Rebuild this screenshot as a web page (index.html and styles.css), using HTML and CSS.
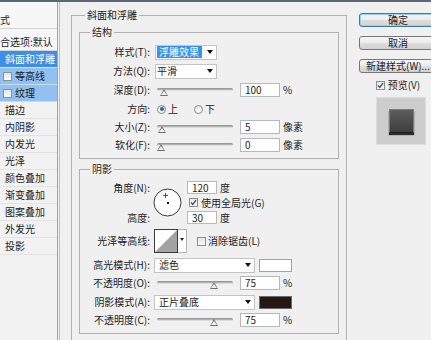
FILE: index.html
```html
<!DOCTYPE html>
<html lang="zh-CN">
<head>
    <meta charset="UTF-8">
    <meta name="viewport" content="width=device-width, initial-scale=1.0">
    <title>图层样式</title>
    <link rel="stylesheet" href="styles.css">
</head>
<body>
    <div class="titlebar"></div>
    <div class="dialog">
        <ul class="effects">
            <li class="head">样式</li>
            <li class="head blend">混合选项:默认</li>
            <li class="active">斜面和浮雕</li>
            <li class="sub"><span class="check"></span>等高线</li>
            <li class="sub"><span class="check"></span>纹理</li>
            <li>描边</li>
            <li>内阴影</li>
            <li>内发光</li>
            <li>光泽</li>
            <li>颜色叠加</li>
            <li>渐变叠加</li>
            <li>图案叠加</li>
            <li>外发光</li>
            <li>投影</li>
        </ul>

        <div class="main">
            <fieldset class="group">
                <legend>斜面和浮雕</legend>

                <fieldset class="section">
                    <legend>结构</legend>
                    <div class="row">
                        <label>样式(T):</label>
                        <div class="select short"><span class="picked">浮雕效果</span></div>
                    </div>
                    <div class="row">
                        <label>方法(Q):</label>
                        <div class="select short"><span>平滑</span></div>
                    </div>
                    <div class="row">
                        <label>深度(D):</label>
                        <div class="slider"><span class="thumb" style="left:3px"></span></div>
                        <div class="field">100</div>
                        <span class="unit">%</span>
                    </div>
                    <div class="row">
                        <label>方向:</label>
                        <span class="radio on"></span><span class="opt">上</span>
                        <span class="radio down"></span><span class="opt">下</span>
                    </div>
                    <div class="row tight">
                        <label>大小(Z):</label>
                        <div class="slider"><span class="thumb" style="left:1px"></span></div>
                        <div class="field">5</div>
                        <span class="unit">像素</span>
                    </div>
                    <div class="row tight">
                        <label>软化(F):</label>
                        <div class="slider"><span class="thumb" style="left:0"></span></div>
                        <div class="field">0</div>
                        <span class="unit">像素</span>
                    </div>
                </fieldset>

                <fieldset class="section shade">
                    <legend>阴影</legend>
                    <div class="angle">
                        <div class="labels">
                            <label>角度(N):</label>
                            <label>高度:</label>
                        </div>
                        <svg class="dial" width="29" height="29" viewBox="0 0 29 29">
                            <circle cx="14.5" cy="14.5" r="13.5" fill="#fff" stroke="#3a3a3a"/>
                            <rect x="14" y="14" width="2" height="2" fill="#111"/>
                            <path d="M12.5 5v5M10 7.5h5" stroke="#555" stroke-width="1"/>
                        </svg>
                        <div class="angle-fields">
                            <div class="line"><div class="field small">120</div><span class="unit">度</span></div>
                            <div class="line global">
                                <span class="check"><svg width="7" height="7" viewBox="0 0 7 7"><path d="M1 3.5l1.8 2L6 1.2" fill="none" stroke="#2f4f7f" stroke-width="1.3"/></svg></span>
                                使用全局光(G)
                            </div>
                            <div class="line"><div class="field small">30</div><span class="unit">度</span></div>
                        </div>
                    </div>

                    <div class="row contour-row">
                        <label>光泽等高线:</label>
                        <div class="contour">
                            <svg width="24" height="24" viewBox="0 0 24 24">
                                <rect x="0.5" y="0.5" width="23" height="23" fill="#fff" stroke="#3a3a3a"/>
                                <polygon points="1,23 23,1 23,23" fill="#a3a3a3"/>
                            </svg>
                            <span class="drop"></span>
                        </div>
                        <span class="check"></span>
                        <span class="opt">消除锯齿(L)</span>
                    </div>

                    <div class="row">
                        <label>高光模式(H):</label>
                        <div class="select long"><span>滤色</span></div>
                        <span class="swatch"></span>
                    </div>
                    <div class="row near">
                        <label>不透明度(O):</label>
                        <div class="slider"><span class="thumb" style="left:53px"></span></div>
                        <div class="field">75</div>
                        <span class="unit">%</span>
                    </div>
                    <div class="row">
                        <label>阴影模式(A):</label>
                        <div class="select long"><span>正片叠底</span></div>
                        <span class="swatch dark"></span>
                    </div>
                    <div class="row near">
                        <label>不透明度(C):</label>
                        <div class="slider"><span class="thumb" style="left:53px"></span></div>
                        <div class="field">75</div>
                        <span class="unit">%</span>
                    </div>
                </fieldset>
            </fieldset>
        </div>

        <div class="actions">
            <button class="default">确定</button>
            <button>取消</button>
            <button>新建样式(W)...</button>
            <div class="preview-toggle">
                <span class="check"><svg width="7" height="7" viewBox="0 0 7 7"><path d="M1 3.5l1.8 2L6 1.2" fill="none" stroke="#2f4f7f" stroke-width="1.3"/></svg></span>
                预览(V)
            </div>
            <div class="preview"><span class="tile"></span></div>
        </div>
    </div>
</body>
</html>
```

FILE: styles.css
```css
body {
    margin: 0;
    width: 431px;
    height: 340px;
    overflow: hidden;
    background-color: #f0f0f0;
    font-family: "Noto Sans CJK SC", "Liberation Sans", sans-serif;
    font-size: 10px;
    line-height: 12px;
    color: #1c1c1c;
}
.titlebar {
    height: 2px;
    background-color: #5c6776;
}
.dialog {
    display: flex;
    height: 338px;
}

/* effect list */
.effects {
    flex: none;
    list-style: none;
    margin: 0;
    padding: 0;
    width: 57px;
    border-right: 1px solid #a4a4a4;
    background-color: #f2f2f2;
    border-bottom-left-radius: 4px;
    overflow: hidden;
}
.effects li {
    display: flex;
    align-items: center;
    gap: 3px;
    height: 16px;
    padding-left: 5px;
    border-bottom: 1px solid #e3e3e3;
    white-space: nowrap;
}
.effects .head {
    display: block;
    line-height: 16px;
    padding: 10px 0 0;
    text-indent: -10px;
    background-color: #f7f7f7;
    border-bottom-color: #d4d4d4;
}
.effects .blend {
    padding-top: 5px;
}
.effects .active {
    background-color: #3c8ee7;
    color: #fff;
}
.effects .sub {
    padding-left: 3px;
    background-color: #92c0f0;
    border-bottom-color: #c5dcf4;
}

/* common controls */
.check {
    display: inline-flex;
    align-items: center;
    justify-content: center;
    flex: none;
    width: 9px;
    height: 9px;
    box-sizing: border-box;
    border: 1px solid #8d8f91;
    background: linear-gradient(#e4e4e4, #fbfbfb);
}
.radio {
    display: inline-flex;
    align-items: center;
    justify-content: center;
    flex: none;
    width: 9px;
    height: 9px;
    box-sizing: border-box;
    border: 1px solid #8a8a8a;
    border-radius: 50%;
    background: linear-gradient(#e6e6e6, #fdfdfd);
    margin-left: 3px;
}
.radio.on::after {
    content: "";
    width: 4px;
    height: 4px;
    border-radius: 50%;
    background-color: #2b65a3;
}
.radio.down {
    margin-left: 16px;
}
.opt {
    margin-left: 2px;
}
.field {
    flex: none;
    width: 40px;
    height: 14px;
    box-sizing: border-box;
    border: 1px solid #b5b9bf;
    background-color: #fff;
    padding-left: 4px;
    line-height: 12px;
    margin-left: 7px;
}
.field.small {
    width: 30px;
    height: 13px;
    line-height: 11px;
    margin-left: 0;
}
.unit {
    margin-left: 3px;
}
.select {
    display: flex;
    align-items: center;
    flex: none;
    height: 15px;
    box-sizing: border-box;
    border: 1px solid #c4c4c4;
    background-color: #fff;
    padding-left: 4px;
}
.select::after {
    content: "";
    margin-left: auto;
    margin-right: 3px;
    border-left: 3px solid transparent;
    border-right: 3px solid transparent;
    border-top: 4px solid #111;
}
.select.short {
    width: 62px;
    margin-left: 1px;
    padding-left: 1px;
}
.select.long {
    width: 101px;
}
.picked {
    background-color: #3592f0;
    color: #fff;
    padding: 0 3px 0 2px;
    line-height: 12px;
}
.slider {
    position: relative;
    flex: none;
    width: 76px;
    height: 16px;
    margin-left: 3px;
}
.slider::before {
    content: "";
    position: absolute;
    left: 0;
    right: 0;
    top: 6px;
    height: 3px;
    border-radius: 2px;
    background: linear-gradient(#8c8c8c, #b9b9b9 60%, #f7f7f7);
}
.thumb {
    position: absolute;
    top: 7px;
    width: 0;
    height: 0;
    border-left: 4px solid transparent;
    border-right: 4px solid transparent;
    border-bottom: 7px solid #6f6f6f;
}
.thumb::after {
    content: "";
    position: absolute;
    left: -3px;
    top: 2px;
    border-left: 3px solid transparent;
    border-right: 3px solid transparent;
    border-bottom: 4px solid #f2f2f2;
}
.swatch {
    flex: none;
    width: 33px;
    height: 13px;
    box-sizing: border-box;
    border: 1px solid #a2a2a2;
    background-color: #fff;
    margin-left: 4px;
}
.swatch.dark {
    background-color: #231816;
    border-color: #6a6a6a;
}

/* group boxes */
fieldset {
    margin: 0;
    padding: 0;
    min-width: 0;
    border: 1px solid #b1b1b1;
}
legend {
    padding: 0 2px;
    line-height: 12px;
}
.main {
    flex: none;
    margin-left: 1px;
    border-left: 1px solid #c0c0c0;
}
.group {
    width: 276px;
    height: 345px;
    box-sizing: border-box;
    margin: 7px 0 0 11px;
    padding: 0 7px;
}
.group > legend {
    margin-left: 6px;
}
.section {
    margin-top: 5px;
    padding: 6px 0 5px;
}
.section > legend {
    margin-left: 10px;
}
.section.shade {
    margin-top: 4px;
    padding-top: 5px;
}
.row {
    display: flex;
    align-items: center;
    height: 16px;
    margin-top: 3px;
    white-space: nowrap;
}
.section > .row:first-of-type {
    margin-top: 0;
}
.row.tight {
    margin-top: 2px;
}
.row.near {
    margin-top: 2px;
}
.row label,
.labels label {
    flex: none;
    width: 70px;
    margin-right: 4px;
    text-align: right;
}

/* angle block */
.angle {
    display: flex;
    align-items: center;
    height: 45px;
}
.labels {
    display: flex;
    flex-direction: column;
    justify-content: space-between;
    height: 45px;
}
.labels label {
    margin-right: 0;
    line-height: 15px;
}
.dial {
    flex: none;
    margin-left: 3px;
}
.angle-fields {
    display: flex;
    flex-direction: column;
    margin-left: 5px;
}
.line {
    display: flex;
    align-items: center;
    height: 15px;
    white-space: nowrap;
}
.line.global {
    gap: 3px;
    margin-left: 2px;
}
.contour-row {
    height: 24px;
    margin-top: 4px;
}
.contour-row .check {
    margin-left: 10px;
}
.contour {
    display: flex;
    flex: none;
}
.contour .drop {
    display: flex;
    justify-content: center;
    padding-top: 8px;
    width: 9px;
    height: 24px;
    box-sizing: border-box;
    border: 1px solid #b4b4b4;
    border-left: none;
    background-color: #fff;
}
.contour .drop::after {
    content: "";
    border-left: 2px solid transparent;
    border-right: 2px solid transparent;
    border-top: 3px solid #222;
    height: 0;
}
.contour-row + .row {
    margin-top: 4px;
}

/* buttons and preview */
.actions {
    flex: none;
    width: 78px;
    margin-left: 12px;
    padding-top: 11px;
}
.actions button {
    display: block;
    width: 78px;
    height: 14px;
    padding: 0;
    margin-bottom: 9px;
    font-family: inherit;
    font-size: 10px;
    line-height: 12px;
    color: #1c1c1c;
    white-space: nowrap;
    border: 1px solid #767676;
    border-radius: 3px;
    background: linear-gradient(#f6f6f6, #ececec 50%, #dedede 51%, #d2d2d2);
}
.actions button.default {
    border-color: #3d7bad;
    box-shadow: inset 0 0 0 1px #8fd0f3;
}
.preview-toggle {
    display: flex;
    align-items: center;
    justify-content: center;
    gap: 3px;
    height: 14px;
    margin-top: -4px;
}
.preview {
    width: 50px;
    height: 48px;
    margin: 5px 0 0 17px;
    background-color: #cdcdcd;
    border: 1px solid #dcdcdc;
    box-sizing: border-box;
    padding: 11px 0 0 12px;
}
.tile {
    display: block;
    width: 25px;
    height: 24px;
    box-sizing: border-box;
    background: linear-gradient(#5d5d5d, #3e3e3e);
    border: 1px solid #7b7b7b;
    border-bottom-color: #1e1e1e;
    box-shadow: 0 2px 1px #2c2c2c;
}
```
